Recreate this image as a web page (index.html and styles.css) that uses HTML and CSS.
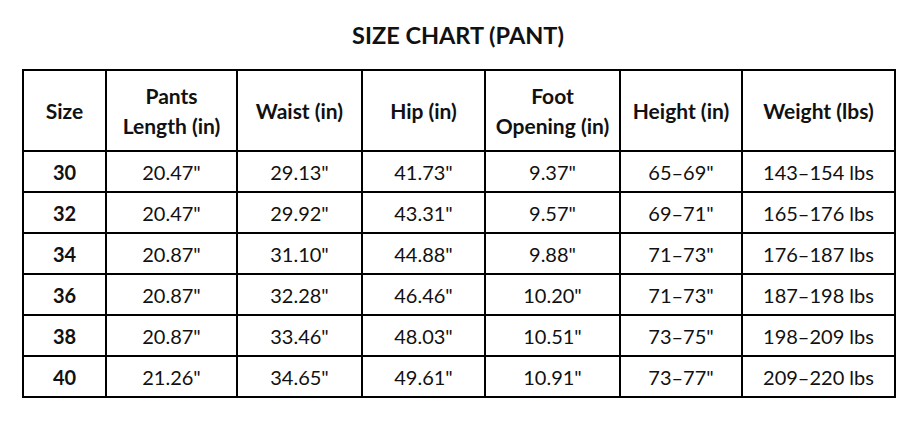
FILE: index.html
```html
<!DOCTYPE html>
<html lang="en">
<head>
<meta charset="utf-8">
<title>Size Chart (Pant)</title>
<link rel="stylesheet" href="styles.css">
</head>
<body>
<div class="page">
  <h1 class="title">SIZE CHART (PANT)</h1>
  <table class="chart">
    <colgroup>
      <col class="c1"><col class="c2"><col class="c3"><col class="c4"><col class="c5"><col class="c6"><col class="c7">
    </colgroup>
    <thead>
      <tr class="head">
        <th>Size</th>
        <th>Pants<br>Length (in)</th>
        <th>Waist (in)</th>
        <th>Hip (in)</th>
        <th>Foot<br>Opening (in)</th>
        <th>Height (in)</th>
        <th>Weight (lbs)</th>
      </tr>
    </thead>
    <tbody>
      <tr><th>30</th><td>20.47"</td><td>29.13"</td><td>41.73"</td><td>9.37"</td><td>65–69"</td><td>143–154 lbs</td></tr>
      <tr><th>32</th><td>20.47"</td><td>29.92"</td><td>43.31"</td><td>9.57"</td><td>69–71"</td><td>165–176 lbs</td></tr>
      <tr><th>34</th><td>20.87"</td><td>31.10"</td><td>44.88"</td><td>9.88"</td><td>71–73"</td><td>176–187 lbs</td></tr>
      <tr><th>36</th><td>20.87"</td><td>32.28"</td><td>46.46"</td><td>10.20"</td><td>71–73"</td><td>187–198 lbs</td></tr>
      <tr><th>38</th><td>20.87"</td><td>33.46"</td><td>48.03"</td><td>10.51"</td><td>73–75"</td><td>198–209 lbs</td></tr>
      <tr><th>40</th><td>21.26"</td><td>34.65"</td><td>49.61"</td><td>10.91"</td><td>73–77"</td><td>209–220 lbs</td></tr>
    </tbody>
  </table>
</div>
</body>
</html>
```

FILE: styles.css
```css
html, body {
  margin: 0;
  padding: 0;
  background: #ffffff;
}

body {
  font-family: Lato, "Open Sans", "Liberation Sans", sans-serif;
  color: #111111;
}

.page {
  width: 872px;
  padding: 0 0 0 22px;
}

.title {
  margin: 0;
  padding-top: 21px;
  height: 69px;
  box-sizing: border-box;
  font-size: 23.5px;
  font-weight: 700;
  line-height: 28px;
  text-align: center;
  color: #111111;
}

.chart {
  width: 872px;
  border-collapse: collapse;
  table-layout: fixed;
  border: 2px solid #000;
}

.c1 { width: 83px; }
.c2 { width: 131px; }
.c3 { width: 125px; }
.c4 { width: 123px; }
.c5 { width: 135px; }
.c6 { width: 122px; }
.c7 { width: 153px; }

.chart th,
.chart td {
  border: 2px solid #000;
  padding: 0;
  text-align: center;
  vertical-align: middle;
  font-size: 20px;
  color: #111111;
}

.chart th {
  font-weight: 700;
}

.chart td {
  font-weight: 400;
}

.head {
  height: 81px;
}

.head th {
  font-size: 21px;
  line-height: 30px;
}

.chart tbody tr {
  height: 41px;
}
```
